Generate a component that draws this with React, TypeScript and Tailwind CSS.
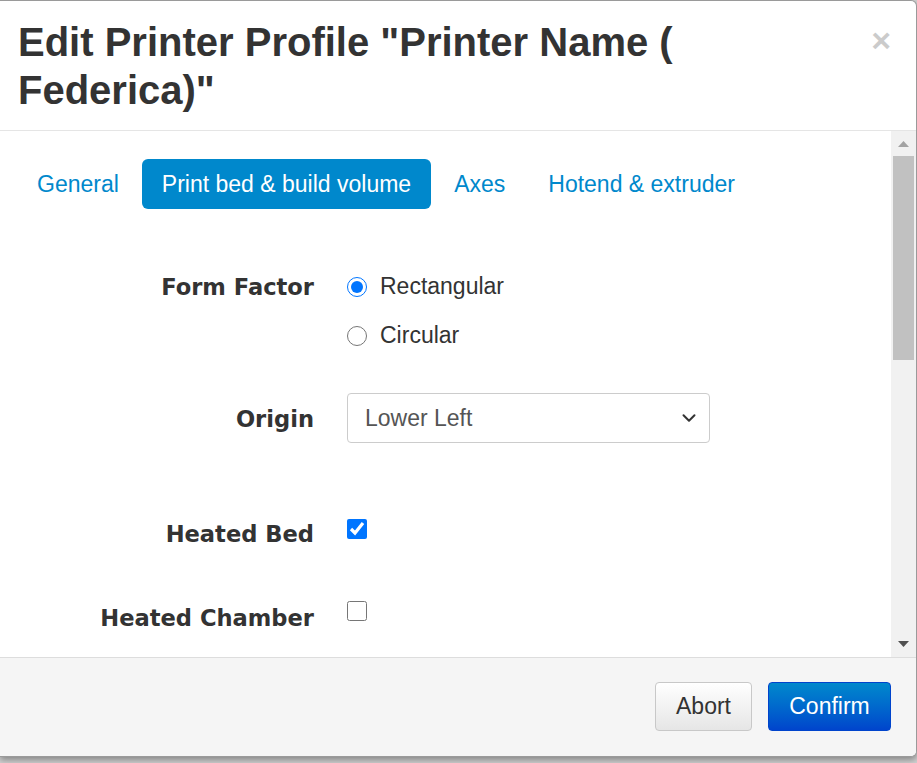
import { ChevronDown } from "lucide-react";

const tabs = ["General", "Print bed & build volume", "Axes", "Hotend & extruder"];
const active = 1;

const sans = "font-['Liberation_Sans',Arial,sans-serif]";
const labelFont = "font-['DejaVu_Sans',Verdana,sans-serif] font-bold text-[22.6px] text-[#333]";

function Label({ children, className = "" }: { children: string; className?: string }) {
  return (
    <div className={`w-[314px] shrink-0 flex justify-end ${labelFont} ${className}`}>
      {children}
    </div>
  );
}

function Scrollbar() {
  return (
    <div className="w-[25px] shrink-0 bg-[#f1f1f1] flex flex-col items-center">
      <div className="h-[25px] w-full flex items-center justify-center">
        <svg width="11" height="6" viewBox="0 0 11 6">
          <path d="M0 6 L5.5 0 L11 6 Z" fill="#a3a3a3" />
        </svg>
      </div>
      <div className="w-[21px] h-[204px] bg-[#c1c1c1]" />
      <div className="flex-1" />
      <div className="h-[26px] w-full flex items-center justify-center">
        <svg width="11" height="6" viewBox="0 0 11 6">
          <path d="M0 0 L11 0 L5.5 6 Z" fill="#505050" />
        </svg>
      </div>
    </div>
  );
}

export default function App() {
  return (
    <div className={`w-[917px] h-[763px] bg-[#d0d0d0] overflow-hidden ${sans}`}>
      <div className="w-[917px] h-[757px] bg-white border-t border-r border-b border-[#9a9a9a] rounded-r-[6px] flex flex-col overflow-hidden shadow-[0_3px_6px_rgba(0,0,0,0.35)]">
        {/* header */}
        <div className="h-[130px] shrink-0 border-b border-[#e5e5e5] flex pl-[18px] pt-[17px]">
          <h3 className="w-[850px] text-[40px] font-bold leading-[48px] text-[#333]">
            Edit Printer Profile "Printer Name ( Federica)"
          </h3>
          <button className="ml-auto mr-[25px] mt-[2px] h-[40px] text-[34px] font-bold leading-[40px] text-black opacity-20">
            ×
          </button>
        </div>

        {/* body */}
        <div className="flex h-[526px] shrink-0 overflow-hidden">
          <div className="flex-1 pt-[28px]">
            <ul className="flex gap-[3px] pl-[17px]">
              {tabs.map((t, i) => (
                <li
                  key={t}
                  className={`h-[50px] px-[20px] flex items-center text-[23px] rounded-[6px] ${
                    i === active ? "bg-[#0088cc] text-white" : "text-[#0088cc]"
                  }`}
                >
                  {t}
                </li>
              ))}
            </ul>

            {/* form factor */}
            <div className="flex mt-[53px]">
              <Label className="h-[49px] items-center pt-[3px]">Form Factor</Label>
              <div className="ml-[33px] flex flex-col">
                <label className="h-[49px] flex items-center gap-[13px] text-[23px] text-[#333]">
                  <input type="radio" name="ff" defaultChecked className="w-[20px] h-[20px] m-0 accent-[#0075ff]" />
                  Rectangular
                </label>
                <label className="h-[49px] flex items-center gap-[13px] text-[23px] text-[#333]">
                  <input type="radio" name="ff" className="w-[20px] h-[20px] m-0 accent-[#0075ff]" />
                  Circular
                </label>
              </div>
            </div>

            {/* origin */}
            <div className="flex mt-[33px] items-center">
              <Label className="pt-[3px]">Origin</Label>
              <div className="ml-[33px] w-[363px] h-[50px] border border-[#cccccc] rounded-[4px] flex items-center pl-[17px] pr-[9px] text-[23px] text-[#555]">
                <span className="flex-1">Lower Left</span>
                <ChevronDown size={22} strokeWidth={2.2} color="#333" />
              </div>
            </div>

            {/* heated bed */}
            <div className="flex mt-[71px] h-[30px] items-center">
              <Label className="pt-[12px]">Heated Bed</Label>
              <input type="checkbox" defaultChecked className="ml-[33px] w-[20px] h-[20px] m-0 accent-[#0075ff]" />
            </div>

            {/* heated chamber */}
            <div className="flex mt-[52px] h-[30px] items-center">
              <Label className="pt-[16px]">Heated Chamber</Label>
              <input type="checkbox" className="ml-[33px] w-[20px] h-[20px] m-0 accent-[#0075ff]" />
            </div>
          </div>
          <Scrollbar />
        </div>

        {/* footer */}
        <div className="flex-1 border-t border-[#dddddd] bg-[#f5f5f5] flex justify-end items-start gap-[16px] pt-[24px] pr-[25px]">
          <button className="w-[97px] h-[49px] rounded-[4px] border border-[#c8c8c8] bg-gradient-to-b from-white to-[#e6e6e6] text-[23px] text-[#333]">
            Abort
          </button>
          <button className="w-[123px] h-[49px] rounded-[4px] border border-[#0044cc] bg-gradient-to-b from-[#0088cc] to-[#0044cc] text-[23px] text-white">
            Confirm
          </button>
        </div>
      </div>
    </div>
  );
}
